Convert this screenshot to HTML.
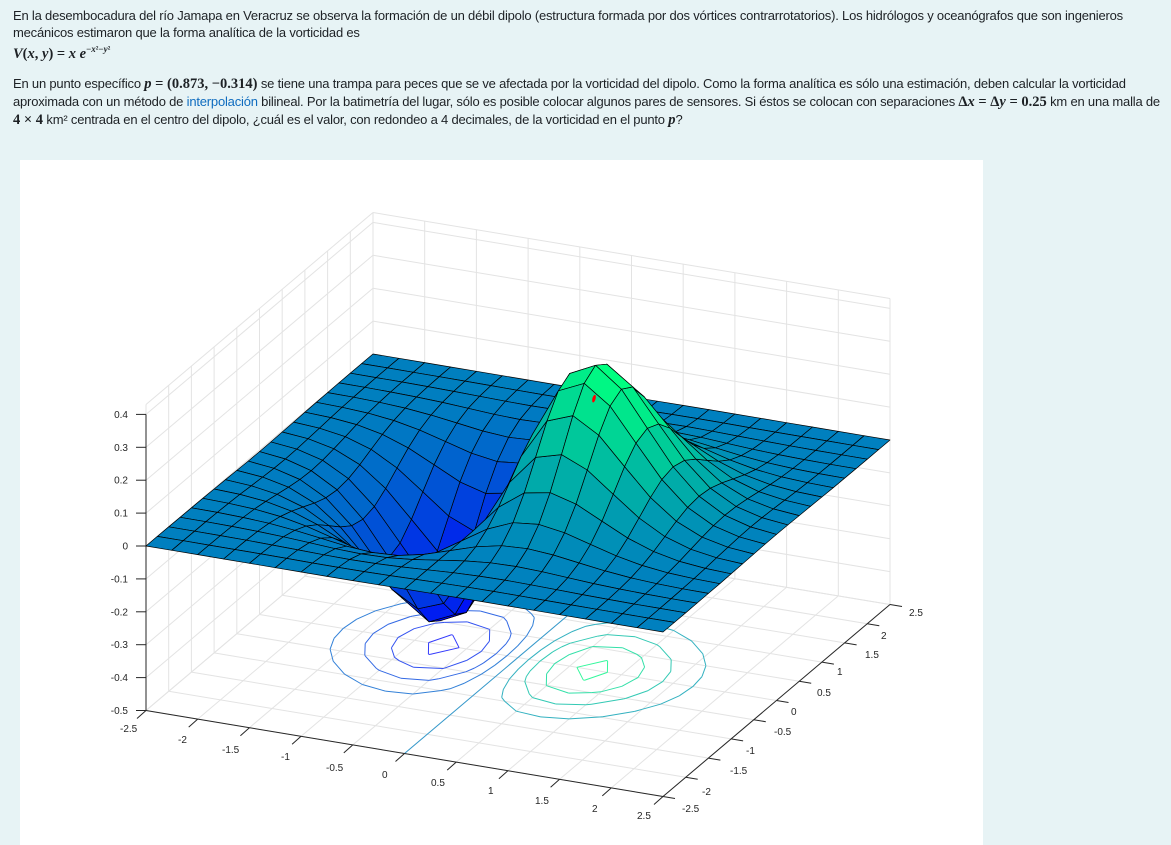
<!DOCTYPE html>
<html><head><meta charset="utf-8">
<style>
html,body{margin:0;padding:0;}
body{width:1171px;height:845px;overflow:hidden;background:#e7f3f5;font-family:"Liberation Sans",sans-serif;color:#1d2125;position:relative;}
.t{position:absolute;left:13px;font-size:13px;white-space:nowrap;letter-spacing:-0.2px;}
.m{font-family:"Liberation Serif",serif;font-weight:bold;font-size:14.5px;letter-spacing:0;}
.mi{font-style:italic;}
a{color:#0f6cbf;text-decoration:none;}
#plot{position:absolute;left:20px;top:160px;width:963px;height:685px;background:#fff;}
svg text{font-family:"Liberation Sans",sans-serif;font-size:10px;fill:#262626;}
</style></head><body>
<div class="t" style="top:8px">En la desembocadura del río Jamapa en Veracruz se observa la formación de un débil dipolo (estructura formada por dos vórtices contrarrotatorios). Los hidrólogos y oceanógrafos que son ingenieros</div>
<div class="t" style="top:25px">mecánicos estimaron que la forma analítica de la vorticidad es</div>
<div class="t" style="top:44px"><span class="m"><span class="mi">V</span>(<span class="mi">x</span>, <span class="mi">y</span>) = <span class="mi">x</span> <span class="mi">e</span><sup style="font-size:9px">−<span class="mi">x</span>²−<span class="mi">y</span>²</sup></span></div>
<div class="t" style="top:76px">En un punto específico <span class="m"><span class="mi">p</span> = (0.873, −0.314)</span> se tiene una trampa para peces que se ve afectada por la vorticidad del dipolo. Como la forma analítica es sólo una estimación, deben calcular la vorticidad</div>
<div class="t" style="top:94px">aproximada con un método de <a>interpolación</a> bilineal. Por la batimetría del lugar, sólo es posible colocar algunos pares de sensores. Si éstos se colocan con separaciones <span class="m">Δ<span class="mi">x</span> = Δ<span class="mi">y</span> = 0.25</span> km en una malla de</div>
<div class="t" style="top:112px"><span class="m">4 × 4</span> km² centrada en el centro del dipolo, ¿cuál es el valor, con redondeo a 4 decimales, de la vorticidad en el punto <span class="m mi">p</span>?</div>
<div id="plot"></div>
<svg id="s" width="1171" height="845" style="position:absolute;left:0;top:0"></svg>
<script>
(function(){
var s=document.getElementById('s'),out=[];
function P(x,y,z){return [146+(x+2.5)/5*517+(y+2.5)/5*227, 546+(x+2.5)/5*86-(y+2.5)/5*192-329*z];}
function f(x,y){return x*Math.exp(-x*x-y*y);}
function L(a,b,c,w){out.push('<line x1="'+a[0].toFixed(1)+'" y1="'+a[1].toFixed(1)+'" x2="'+b[0].toFixed(1)+'" y2="'+b[1].toFixed(1)+'" stroke="'+c+'" stroke-width="'+(w||1)+'"/>');}
var g='#e3e3e3',zb=-0.5,zt=0.43,i,v;
for(i=0;i<=10;i++){v=-2.5+i*0.5;
 L(P(v,-2.5,zb),P(v,2.5,zb),g);L(P(-2.5,v,zb),P(2.5,v,zb),g);
 L(P(v,2.5,zb),P(v,2.5,zt),g);L(P(-2.5,v,zb),P(-2.5,v,zt),g);}
for(i=0;i<=9;i++){v=-0.5+i*0.1;L(P(-2.5,-2.5,v),P(-2.5,2.5,v),g);L(P(-2.5,2.5,v),P(2.5,2.5,v),g);}
L(P(-2.5,-2.5,zt),P(-2.5,2.5,zt),g);L(P(-2.5,2.5,zt),P(2.5,2.5,zt),g);
function cm(z){var t=(z+0.4289)/0.8578;t=Math.max(0,Math.min(1,t));return 'rgb(0,'+Math.round(255*t)+','+Math.round(255*(1-t/2))+')';}
function cl(z){var t=(z+0.4289)/0.8578;t=Math.max(0,Math.min(1,t));var w=0.2;return 'rgb('+Math.round(255*w)+','+Math.round(255*(t*(1-w)+w))+','+Math.round(255*((1-t/2)*(1-w)+w))+')';}
var h=0.25,N=21,lv=[-0.4,-0.3,-0.2,-0.1,0.1,0.2,0.3,0.4];
lv.forEach(function(c){var col=cl(c);
 for(var a=0;a<N-1;a++)for(var b=0;b<N-1;b++){
  var x0=-2.5+a*h,y0=-2.5+b*h,x1=x0+h,y1=y0+h;
  var q=[[x0,y0],[x1,y0],[x1,y1],[x0,y1]],fv=q.map(function(p){return f(p[0],p[1]);}),pts=[];
  for(var k=0;k<4;k++){var k2=(k+1)%4,fa=fv[k]-c,fb=fv[k2]-c;
   if((fa<0)!=(fb<0)){var t=fa/(fa-fb);pts.push([q[k][0]+t*(q[k2][0]-q[k][0]),q[k][1]+t*(q[k2][1]-q[k][1])]);}}
  for(var m=0;m+1<pts.length;m+=2)L(P(pts[m][0],pts[m][1],zb),P(pts[m+1][0],pts[m+1][1],zb),col);
 }});
L(P(0,-2.5,zb),P(0,2.5,zb),cl(0));
var ax='#262626';
L(P(-2.5,-2.5,zb),P(2.5,-2.5,zb),ax);L(P(2.5,-2.5,zb),P(2.5,2.5,zb),ax);L(P(-2.5,-2.5,zb),P(-2.5,-2.5,0.4),ax);
var xl=['-2.5','-2','-1.5','-1','-0.5','0','0.5','1','1.5','2','2.5'];
for(i=0;i<=10;i++){v=-2.5+i*0.5;
 var a=P(v,-2.5,zb);L(a,[a[0]-9,a[1]+8],ax);
 var tx=[120,178,222,281,326,382,431,488,535,592,637][i],ty=[728,739,749,756,767,774,782,790,800,808,815][i];
 out.push('<text x="'+tx+'" y="'+(ty+4)+'">'+xl[i]+'</text>');
 var b=P(2.5,v,zb);L(b,[b[0]+12,b[1]+2],ax);
 var yx=[688,708,736,752,780,797,823,843,871,887,915][i],yy=[808,791,770,750,731,711,692,671,654,635,612][i];
 out.push('<text x="'+(yx-6)+'" y="'+(yy+4)+'">'+xl[i]+'</text>');}
var zl=['-0.5','-0.4','-0.3','-0.2','-0.1','0','0.1','0.2','0.3','0.4'];
for(i=0;i<=9;i++){v=-0.5+i*0.1;var c=P(-2.5,-2.5,v);L(c,[c[0]-10,c[1]],ax);
 out.push('<text x="128" y="'+(c[1]+3.5)+'" text-anchor="end">'+zl[i]+'</text>');}
var faces=[];
for(var a2=0;a2<N-1;a2++)for(var b2=0;b2<N-1;b2++){
 var X0=-2.5+a2*h,Y0=-2.5+b2*h,X1=X0+h,Y1=Y0+h;
 var cs=[[X0,Y0],[X1,Y0],[X1,Y1],[X0,Y1]],zs=cs.map(function(p){return f(p[0],p[1]);});
 var zm=(zs[0]+zs[1]+zs[2]+zs[3])/4,xm=X0+h/2,ym=Y0+h/2;
 var key=(-0.61*xm+0.79*ym)*0.866/5-zm/0.93*0.5;
 var pp=cs.map(function(p,k){var r=P(p[0],p[1],zs[k]);return r[0].toFixed(1)+','+r[1].toFixed(1);}).join(' ');
 faces.push([key,'<polygon points="'+pp+'" fill="'+cm(zs[0])+'" stroke="#000" stroke-width="0.7" stroke-linejoin="round"/>']);}
faces.sort(function(p,q){return q[0]-p[0];});
faces.forEach(function(F){out.push(F[1]);});
var r=P(0.873,-0.314,f(0.873,-0.314));
out.push('<ellipse cx="'+r[0].toFixed(1)+'" cy="'+r[1].toFixed(1)+'" rx="1.6" ry="4" fill="#f00" transform="rotate(15 '+r[0].toFixed(1)+' '+r[1].toFixed(1)+')"/>');
s.innerHTML=out.join('');
})();
</script>
</body></html>
